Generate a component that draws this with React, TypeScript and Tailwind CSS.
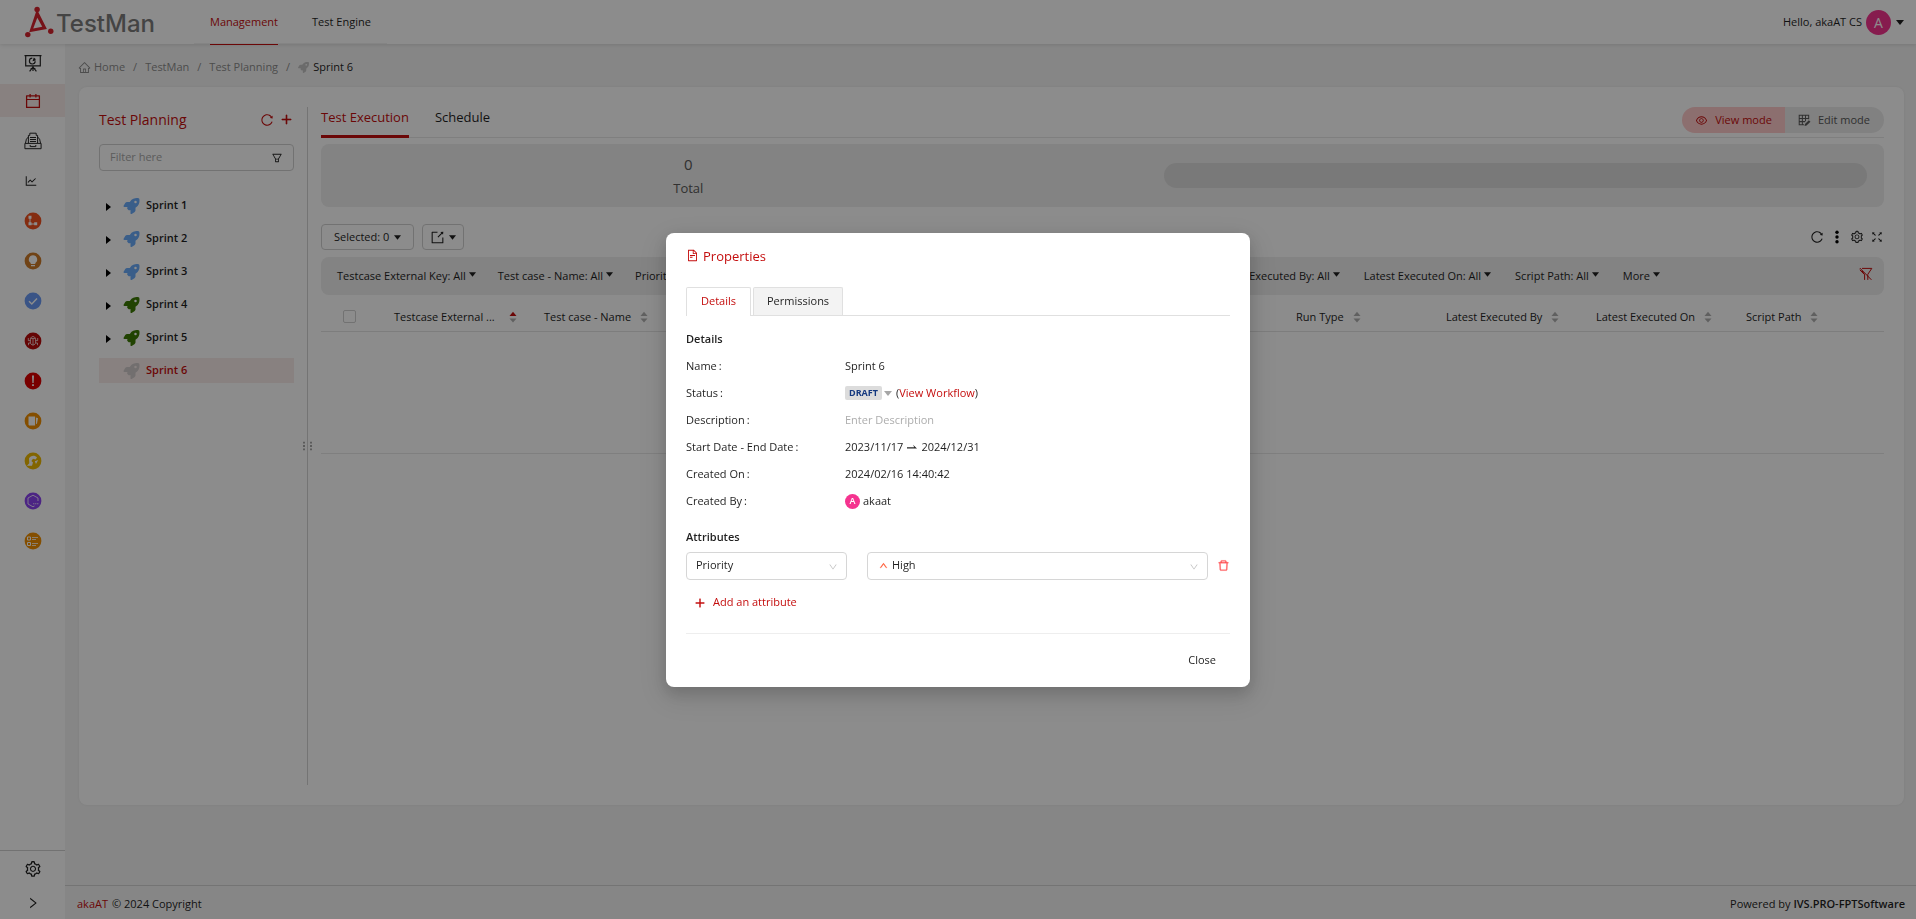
import React from 'react';
import {
  AiOutlineCalendar,
  AiOutlineLineChart,
  AiOutlineExport,
  AiOutlineReload,
  AiOutlineFilter,
  AiOutlineSetting,
  AiOutlineFileText,
  AiOutlineHome,
  AiOutlinePlus,
  AiOutlineRight,
  AiOutlineDown,
  AiOutlineUp,
  AiOutlineDelete,
  AiOutlineEye,
  AiOutlineFullscreen,
} from 'react-icons/ai';
import { FaRocket } from 'react-icons/fa6';

function Caret({ className = '' }: { className?: string }) {
  return (
    <svg viewBox="0 0 8 5" className={`h-[5px] w-2 shrink-0 ${className}`} fill="currentColor">
      <path d="M0 0h8L4 5z" />
    </svg>
  );
}

function Logo() {
  return (
    <a href="#home" className="flex w-[129px] shrink-0 items-center">
      <svg viewBox="0 0 32 34" className="h-[34px] w-[31px] shrink-0" fill="#d8242f">
        <circle cx="12.5" cy="4" r="2.8" />
        <circle cx="2.9" cy="30" r="2.8" />
        <circle cx="26.6" cy="26.6" r="2.8" />
        <path fillRule="evenodd" d="M11.4 6.500h2.200L22.600 24.200 4.300 27.600zM12.700 12.600 8.500 23.600l9.300-1.800z" />
      </svg>
      <span className="pt-1 font-['Inter',sans-serif] text-[24px] leading-8 font-medium text-[#7c7c7c]">TestMan</span>
    </a>
  );
}

function ScreenIcon() {
  return (
    <svg viewBox="0 0 18 18" className="h-[18px] w-[18px] translate-y-[2px]" fill="none" stroke="#262626" strokeWidth="1.2">
      <path d="M.5 1.600h17M1.700 1.600v10.200h14.600V1.600M9 12v5M9 13l-3.400 4.300M9 13l3.400 4.300M6.600 14.500h4.800" />
      <path d="M8.300 4.200a2.900 2.900 0 1 0 2.900 3.100" />
      <path d="M8.500 7.200 9.800 3.400a3 3 0 0 1 1.900 3.200z" fill="#262626" stroke="none" />
    </svg>
  );
}

function ArchiveIcon() {
  return (
    <svg viewBox="0 0 18 18" className="h-[18px] w-[18px]" fill="none" stroke="#262626" strokeWidth="1">
      <path d="M4.400 11V3.400h1.400V1.200h6.400v2.200h1.400V11M4.400 5 2.400 7.200 1.500 11M13.600 5l2 2.200.9 3.800M.9 11.400h16.200v5.300H.9zM6 5.500h6M6 7.500h6M6 9.500h6M6.200 13v1.600h5.600V13" />
    </svg>
  );
}

function EditGridIcon() {
  return (
    <svg viewBox="0 0 14 14" className="h-[13px] w-[13px]" fill="none" stroke="currentColor">
      <path d="M6.500 11.600H1.300V1.400h10.200v4.200M1.300 4.800h10.200M1.300 8.200h6.400M4.700 1.400v10.200M8.100 1.400v6.400" strokeWidth="1.1" />
      <path d="m7 13 .5-2.200 4.200-4.200 1.700 1.700-4.200 4.200z" fill="currentColor" stroke="none" />
    </svg>
  );
}

function ClearFilterIcon() {
  return (
    <svg viewBox="0 0 14 14" className="h-[14px] w-[14px]" fill="none" stroke="#c40d0d" strokeWidth="1">
      <path d="M3 1.400h9.800L8.800 7.300V12.900M5.600 12.900V7.600L2.900 3.600M.8 1l11.600 11.800M.8 2.800 5.500 7.600" />
    </svg>
  );
}

type Badge = { color: string; label: string; art: React.ReactNode };

const badges: Badge[] = [
  {
    color: '#f0501e',
    label: 'Workflow',
    art: (
      <>
        <path d="M6 5v7h6" fill="none" stroke="#fff" strokeWidth="1" />
        <path d="M4.500 3.800h3V6.800h-3zM4.500 10.300h3v3h-3zM10.200 10.300h3v3h-3z" fill="#fff" />
      </>
    ),
  },
  {
    color: '#cc7a29',
    label: 'Ideas',
    art: (
      <path d="M9 3.200a4.200 4.200 0 0 0-2.300 7.700v1.200h4.600v-1.200A4.200 4.200 0 0 0 9 3.200zM7 13h4v1.200H7z" fill="#fff" />
    ),
  },
  {
    color: '#6a9af5',
    label: 'Tasks',
    art: <path d="m5 9.200 2.800 2.800L13 6.400" fill="none" stroke="#fff" strokeWidth="1.4" />,
  },
  {
    color: '#b80a0a',
    label: 'Bugs',
    art: (
      <path
        d="M6.400 6.400h5.200v4.800L10 13H8l-1.600-1.800zM9 6.400V13M7 6.200c0-2.200 4-2.200 4 0M6.400 8.600H4.300V6M11.600 8.600h2.100V6M6.400 11H4.500v2.200M11.600 11h1.900v2.200"
        fill="none"
        stroke="#fff"
        strokeWidth="0.7"
      />
    ),
  },
  {
    color: '#dc0000',
    label: 'Alerts',
    art: <path d="M8 3.500h2L9.600 11H8.400zM8.100 12.200h1.800V14H8.100z" fill="#fff" />,
  },
  {
    color: '#f08f00',
    label: 'Documents',
    art: <path d="M4.500 4.600h6.600v8.800H5.200l-.7-.7zM12 5.600l2 .6-1 5.200-1 .9z" fill="#fff" />,
  },
  {
    color: '#edb800',
    label: 'Sync',
    art: (
      <path
        d="M5 6.600C6.500 3.300 11 3 13 5.600L11.600 7.500 9 6.800 7.400 9 9 10.600l-1 3.200H2.900l2.400-2.600zM10.800 9.300l1.200 2.700 2.200-4"
        fill="#fff"
      />
    ),
  },
  {
    color: '#8a42f0',
    label: 'Components',
    art: (
      <>
        <path d="M14 9V6L9 3.200 4 6v6l5 2.800 1.500-.8" fill="none" stroke="#fff" strokeWidth="0.8" />
        <path d="M9.300 11.200h1v1h-1zM11.300 11.200h1v1h-1zM13.300 11.200h1v1h-1z" fill="#fff" />
      </>
    ),
  },
  {
    color: '#f08f00',
    label: 'Forms',
    art: (
      <>
        <path d="M3.500 5h3v3h-3zM3.500 10.500h3v3h-3z" fill="none" stroke="#fff" strokeWidth="1" />
        <path d="M8 5.500h6M8 7.500h4M8 11.500h6M8 13.500h4" stroke="#fff" strokeWidth="0.8" />
      </>
    ),
  },
];

function Sidebar() {
  return (
    <aside className="flex w-[65px] shrink-0 flex-col bg-white">
      <nav className="flex flex-col gap-[7px]">
        <a href="#dashboard" aria-label="Dashboard" className="flex h-[33px] items-center justify-center">
          <ScreenIcon />
        </a>
        <a
          href="#planning"
          aria-label="Test planning"
          className="flex h-[33px] items-center justify-center bg-[#f8ebe9] text-[#c40d0d]"
        >
          <AiOutlineCalendar className="h-[18px] w-[18px]" />
        </a>
        <a href="#repository" aria-label="Repository" className="flex h-[33px] items-center justify-center">
          <ArchiveIcon />
        </a>
        <a href="#reports" aria-label="Reports" className="flex h-[33px] items-center justify-center">
          <AiOutlineLineChart className="mr-1 h-3.5 w-3.5" />
        </a>
        {badges.map((b) => (
          <a key={b.label} href="#item" aria-label={b.label} className="flex h-[33px] items-center justify-center">
            <svg viewBox="0 0 18 18" className="h-[18px] w-[18px]">
              <circle cx="9" cy="9" r="8.400" fill={b.color} />
              {b.art}
            </svg>
          </a>
        ))}
      </nav>
      <div className="mt-auto flex flex-col items-center border-t border-[#d0d0d0]">
        <button aria-label="Settings" className="flex h-[35px] items-center">
          <AiOutlineSetting className="h-[18px] w-[18px]" />
        </button>
        <button aria-label="Expand" className="flex h-[33px] items-center">
          <AiOutlineRight className="h-3.5 w-3.5" />
        </button>
      </div>
    </aside>
  );
}

function Header() {
  return (
    <header className="z-10 flex h-11 shrink-0 items-center bg-white pr-3 pl-[25px] shadow-[0_1px_4px_rgba(0,0,0,0.12)]">
      <Logo />
      <nav className="ml-10 flex h-11 border-b border-[#f0f0f0] px-4 text-[11px] leading-[43px]">
        <a href="#management" className="h-[45px] border-b border-[#c40d0d] text-[#c40d0d]">
          Management
        </a>
        <a href="#engine" className="ml-[34px]">
          Test Engine
        </a>
      </nav>
      <button className="ml-auto flex items-center">
        <span>Hello, akaAT CS</span>
        <span className="ml-1 flex h-[25px] w-[25px] items-center justify-center rounded-full bg-[#f5338f] text-[14px] text-white">
          A
        </span>
        <Caret className="ml-[5px]" />
      </button>
    </header>
  );
}

function Breadcrumb() {
  return (
    <nav className="flex h-[43px] items-center pt-1 pb-px pl-[13px] text-[#8c8c8c]">
      <a href="#home" className="flex items-center gap-[3px]">
        <AiOutlineHome className="h-[13px] w-[13px]" />
        Home
      </a>
      <span className="mx-2">/</span>
      <a href="#testman">TestMan</a>
      <span className="mx-2">/</span>
      <a href="#test-planning">Test Planning</a>
      <span className="mx-2">/</span>
      <a href="#sprint6" className="flex items-center gap-1 text-[#1f1f1f]">
        <FaRocket className="h-[11px] w-[11px] text-[#c4c4c4]" />
        Sprint 6
      </a>
    </nav>
  );
}

const sprints = [
  { name: 'Sprint 1', tone: 'text-[#6babfa]' },
  { name: 'Sprint 2', tone: 'text-[#6babfa]' },
  { name: 'Sprint 3', tone: 'text-[#6babfa]' },
  { name: 'Sprint 4', tone: 'text-[#3d7a05]' },
  { name: 'Sprint 5', tone: 'text-[#3d7a05]' },
];

function PlanTree() {
  return (
    <section className="w-[208px] shrink-0 pr-[13px]">
      <div className="flex h-[25px] items-center pr-px text-[#c40d0d]">
        <h1 className="text-[14px] font-medium">Test Planning</h1>
        <button aria-label="Reload" className="ml-auto">
          <AiOutlineReload className="h-3.5 w-3.5" />
        </button>
        <button aria-label="Add" className="ml-1.5">
          <AiOutlinePlus className="h-[13px] w-[13px] stroke-[50]" />
        </button>
      </div>
      <div className="mt-3 flex h-[27px] items-center rounded border border-[#d0d0d0] px-2.5">
        <input
          aria-label="Filter"
          placeholder="Filter here"
          className="w-0 flex-1 bg-transparent placeholder:text-[#a8a8a8] focus:outline-none"
        />
        <AiOutlineFilter className="h-3 w-3 text-[#262626]" />
      </div>
      <ul className="mt-[22px] flex flex-col gap-2">
        {sprints.map((s) => (
          <li key={s.name} className="flex h-[25px] items-center pl-[7px]">
            <button aria-label={`Expand ${s.name}`}>
              <svg viewBox="0 0 5 8" className="mt-0.5 h-2 w-[5px]">
                <path d="M0 0v8l5-4z" />
              </svg>
            </button>
            <FaRocket className={`ml-3 h-4 w-[17px] ${s.tone}`} />
            <span className="ml-1.5 font-semibold">{s.name}</span>
          </li>
        ))}
        <li className="flex h-[25px] items-center bg-[#f8ebe9] pl-6">
          <FaRocket className="h-4 w-[17px] text-[#cfcaca]" />
          <span className="ml-1.5 font-semibold text-[#c40d0d]">Sprint 6</span>
        </li>
      </ul>
    </section>
  );
}

function Sorter({ asc = false }: { asc?: boolean }) {
  return (
    <svg viewBox="0 0 8 12" className="h-3 w-2 shrink-0">
      <path d="M.5 5 4 .8 7.500 5z" fill={asc ? '#c40d0d' : '#b0b0b0'} />
      <path d="M.5 7.500h7L4 11.500z" fill="#b0b0b0" />
    </svg>
  );
}

function FilterButton({ label }: { label: string }) {
  return (
    <button className="flex items-center gap-[3px] whitespace-nowrap">
      {label}
      <Caret className="mb-1 w-[7px]" />
    </button>
  );
}

function Column({ label, asc, spread }: { label: string; asc?: boolean; spread?: boolean }) {
  return (
    <th className="px-4 pt-2 text-left font-medium">
      <button
        className={`flex items-center whitespace-nowrap ${spread ? 'w-[123px] justify-between' : 'gap-[9px]'}`}
      >
        {label}
        <Sorter asc={asc} />
      </button>
    </th>
  );
}

function Workspace() {
  return (
    <section className="flex min-w-0 flex-1 flex-col pl-[13px]">
      <div className="flex h-[31px] items-start border-b border-[#e8e8e8]">
        <div className="flex text-[13px] leading-5">
          <button className="h-[31px] border-b-[3px] border-[#c40d0d] pb-2 font-medium text-[#c40d0d]">
            Test Execution
          </button>
          <button className="ml-[26px] h-[31px] pb-[11px]">Schedule</button>
        </div>
        <div className="ml-auto flex h-[26px] overflow-hidden rounded-full font-medium">
          <button className="flex items-center gap-[7px] bg-[#ffcaca] pr-[13px] pl-[13px] text-[#c40d0d]">
            <AiOutlineEye className="h-[13px] w-[13px]" />
            View mode
          </button>
          <button className="flex items-center gap-[7px] bg-[#ebebeb] pr-3.5 pl-[13px] text-[#595959]">
            <EditGridIcon />
            Edit mode
          </button>
        </div>
      </div>

      <div className="mt-1.5 flex h-[63px] items-center rounded-lg bg-[#eeeeee] pr-[17px]">
        <div className="flex w-[47%] flex-col items-center pl-2 text-[#595959]">
          <strong className="text-[15px] leading-6 font-medium">0</strong>
          <span className="text-[13px] leading-6">Total</span>
        </div>
        <div className="ml-auto h-[25px] w-5/11 rounded-full bg-[#dcdcdc]" />
      </div>

      <div className="mt-[17px] flex h-[26px] items-center">
        <button className="flex h-[26px] items-center gap-[5px] rounded border border-[#d0d0d0] px-3">
          Selected: 0
          <Caret className="w-[7px]" />
        </button>
        <button
          aria-label="Export"
          className="ml-2 flex h-[26px] items-center gap-1 rounded border border-[#d0d0d0] px-[7px]"
        >
          <AiOutlineExport className="h-[15px] w-[15px]" />
          <Caret className="w-[7px]" />
        </button>
        <div className="ml-auto flex items-center gap-1.5">
          <button aria-label="Reload">
            <AiOutlineReload className="h-3.5 w-3.5" />
          </button>
          <button aria-label="More">
            <svg viewBox="0 0 14 14" className="h-3.5 w-3.5">
              <circle cx="7" cy="2.200" r="1.700" />
              <circle cx="7" cy="7" r="1.700" />
              <circle cx="7" cy="11.800" r="1.700" />
            </svg>
          </button>
          <button aria-label="Settings">
            <AiOutlineSetting className="h-3.5 w-3.5" />
          </button>
          <button aria-label="Fullscreen">
            <AiOutlineFullscreen className="h-3.5 w-3.5" />
          </button>
        </div>
      </div>

      <div className="mt-[7px] flex h-[38px] items-center rounded-lg bg-[#eeeeee] pr-[11px] pl-4">
        <div className="flex gap-[22px]">
          <FilterButton label="Testcase External Key: All" />
          <FilterButton label="Test case - Name: All" />
          <FilterButton label="Priority: All" />
        </div>
        <div className="mr-[199px] ml-auto flex gap-6">
          <FilterButton label="Latest Executed By: All" />
          <FilterButton label="Latest Executed On: All" />
          <FilterButton label="Script Path: All" />
          <FilterButton label="More" />
        </div>
        <button aria-label="Clear filters" className="mb-1">
          <ClearFilterIcon />
        </button>
      </div>

      <table className="w-full table-fixed border-b border-[#e8e8e8]">
        <colgroup>
          <col className="w-[57px]" />
          <col className="w-[150px]" />
          <col className="w-[150px]" />
          <col />
          <col className="w-[150px]" />
          <col className="w-[150px]" />
          <col className="w-[150px]" />
          <col className="w-[154px]" />
        </colgroup>
        <thead>
          <tr className="h-9 border-b border-[#e4e4e4]">
            <th className="pt-2">
              <input
                type="checkbox"
                aria-label="Select all"
                className="mx-auto block h-[13px] w-[13px] appearance-none rounded-xs border border-[#cfcfcf]"
              />
            </th>
            <Column label="Testcase External ..." asc spread />
            <Column label="Test case - Name" />
            <th />
            <Column label="Run Type" />
            <Column label="Latest Executed By" />
            <Column label="Latest Executed On" />
            <Column label="Script Path" />
          </tr>
        </thead>
        <tbody>
          <tr className="h-[122px]">
            <td colSpan={8} />
          </tr>
        </tbody>
      </table>
    </section>
  );
}

function DetailRow({ label, children }: { label: string; children: React.ReactNode }) {
  return (
    <div className="flex h-[27px] items-center">
      <dt className="w-[159px] shrink-0 font-medium">
        {label}
        <span className="ml-0.5">:</span>
      </dt>
      <dd className="flex flex-1 items-center">{children}</dd>
    </div>
  );
}

function PropertiesDialog() {
  return (
    <div className="fixed inset-0 z-20 flex items-center justify-center bg-black/45">
      <div
        role="dialog"
        aria-labelledby="dialog-title"
        className="w-[584px] rounded-lg bg-white px-5 pt-[15px] pb-3 shadow-[0_6px_16px_rgba(0,0,0,0.16),0_9px_28px_8px_rgba(0,0,0,0.08)]"
      >
        <h2 id="dialog-title" className="flex items-center gap-1 text-[13px] leading-4 font-medium text-[#c40d0d]">
          <AiOutlineFileText className="h-[13px] w-[13px]" />
          Properties
        </h2>

        <div role="tablist" className="mt-[23px] flex gap-0.5 border-b border-[#e0e0e0]">
          <button
            role="tab"
            aria-selected="true"
            className="-mb-px h-[29px] rounded-t-xs border border-b-0 border-[#e0e0e0] bg-white px-3.5 font-medium text-[#c40d0d]"
          >
            Details
          </button>
          <button
            role="tab"
            aria-selected="false"
            className="h-7 rounded-t-xs border border-b-0 border-[#e0e0e0] bg-[#f3f3f3] px-[13px]"
          >
            Permissions
          </button>
        </div>

        <h3 className="mt-[15px] leading-4 font-semibold">Details</h3>
        <dl className="mt-1.5">
          <DetailRow label="Name">
            <input aria-label="Name" defaultValue="Sprint 6" className="w-full focus:outline-none" />
          </DetailRow>
          <DetailRow label="Status">
            <button className="flex items-center gap-0.5">
              <span className="rounded-xs bg-[#dcdcdc] px-1 text-[9px] leading-[14px] font-bold text-[#14387f]">
                DRAFT
              </span>
              <Caret className="w-1.5 text-[#a6a6a6]" />
            </button>
            <span className="ml-1">
              (
              <a href="#workflow" className="text-[#c40d0d]">
                View Workflow
              </a>
              )
            </span>
          </DetailRow>
          <DetailRow label="Description">
            <input
              aria-label="Description"
              placeholder="Enter Description"
              className="w-full placeholder:text-[#adadad] focus:outline-none"
            />
          </DetailRow>
          <DetailRow label="Start Date - End Date">
            2023/11/17
            <svg viewBox="0 0 10 6" className="mx-1 h-1.5 w-2.5" fill="#262626">
              <path d="M0 3.200h7.200L6 .8 10 4.400H0z" />
            </svg>
            2024/12/31
          </DetailRow>
          <DetailRow label="Created On">2024/02/16 14:40:42</DetailRow>
          <DetailRow label="Created By">
            <span className="mr-[3px] flex h-[15px] w-[15px] items-center justify-center rounded-full bg-[#f5338f] text-[9px] font-semibold text-white">
              A
            </span>
            akaat
          </DetailRow>
        </dl>

        <h3 className="mt-3.5 leading-4 font-semibold">Attributes</h3>
        <div className="mt-[7px] flex items-center">
          <div className="relative w-[161px]">
            <select
              aria-label="Attribute"
              className="block h-7 w-full appearance-none rounded border border-[#d6d6d6] bg-white px-[9px]"
            >
              <option>Priority</option>
            </select>
            <AiOutlineDown className="pointer-events-none absolute top-[10px] right-[9px] h-2.5 w-2.5 text-[#bfbfbf]" />
          </div>
          <div className="relative ml-5 flex-1">
            <select
              aria-label="Attribute value"
              className="block h-7 w-full appearance-none rounded border border-[#d6d6d6] bg-white pr-2.5 pl-6"
            >
              <option>High</option>
            </select>
            <AiOutlineUp className="pointer-events-none absolute top-[9px] left-3 h-[9px] w-[9px] stroke-[40] text-[#ff5630]" />
            <AiOutlineDown className="pointer-events-none absolute top-[10px] right-[9px] h-2.5 w-2.5 text-[#bfbfbf]" />
          </div>
          <button aria-label="Delete attribute" className="ml-[9px] text-[#ff4d4f]">
            <AiOutlineDelete className="h-[13px] w-[13px] stroke-[20]" />
          </button>
        </div>
        <button className="mt-[11px] ml-2 flex h-6 items-center gap-[7px] text-[#c40d0d]">
          <AiOutlinePlus className="h-3 w-3 stroke-[40]" />
          Add an attribute
        </button>

        <div className="mt-[18px] flex justify-end border-t border-[#eeeeee] pt-[13px]">
          <button className="h-7 px-3.5">Close</button>
        </div>
      </div>
    </div>
  );
}

export default function App() {
  return (
    <div className="flex min-h-screen flex-col bg-[#f5f5f5] font-['Open_Sans','Noto_Sans',sans-serif] text-[11px] text-[#1f1f1f]">
      <Header />
      <div className="flex flex-1">
        <Sidebar />
        <div className="flex min-w-0 flex-1 flex-col">
          <Breadcrumb />
          <main className="mr-3 ml-3.5 flex rounded-lg bg-white p-5 shadow-[0_0_3px_rgba(0,0,0,0.08)]">
            <PlanTree />
            <div className="relative min-h-[678px] w-px bg-[#d4d4d4]">
              <svg
                viewBox="0 0 9 9"
                className="absolute top-1/2 -left-1 h-[9px] w-[9px] -translate-y-1/2"
                fill="#a6a6a6"
              >
                <path d="M0 0h2v2H0zM0 3.500h2v2H0zM0 7h2v2H0zM7 0h2v2H7zM7 3.500h2v2H7zM7 7h2v2H7z" />
              </svg>
            </div>
            <Workspace />
          </main>
          <footer className="mt-auto flex h-[34px] items-center border-t border-[#d4d4d4] pt-1 pr-[11px] pl-3">
            <a href="#akaat" className="text-[#c40d0d]">
              akaAT
            </a>
            <span className="ml-1">© 2024 Copyright</span>
            <span className="ml-auto">
              Powered by <b className="font-semibold">IVS.PRO-FPTSoftware</b>
            </span>
          </footer>
        </div>
      </div>
      <PropertiesDialog />
    </div>
  );
}
